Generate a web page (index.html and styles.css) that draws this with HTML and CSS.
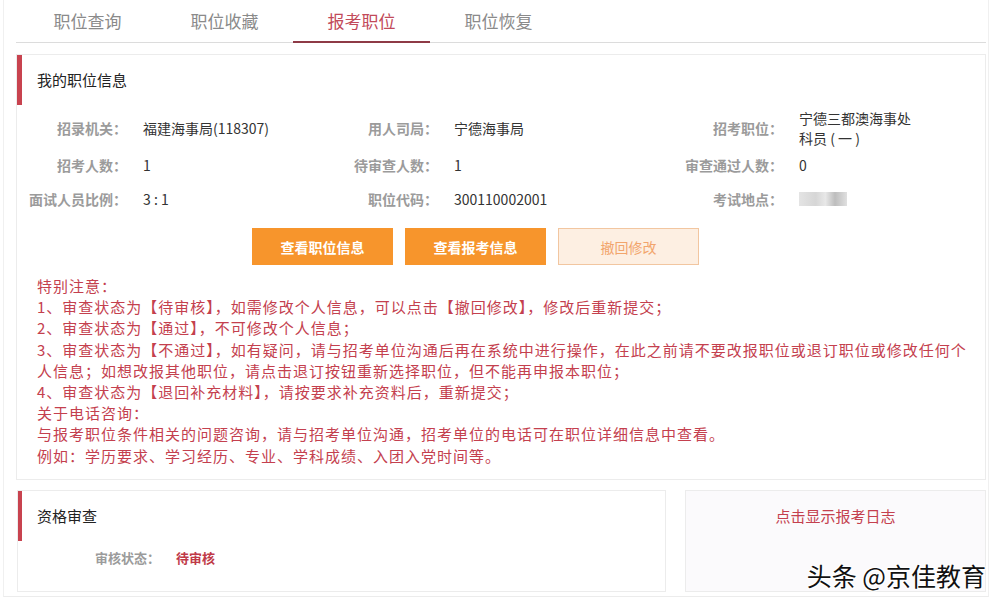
FILE: index.html
```html
<!DOCTYPE html>
<html lang="zh-CN">
<head>
    <meta charset="UTF-8">
    <meta name="viewport" content="width=device-width, initial-scale=1.0">
    <title>报考职位</title>
    <link rel="stylesheet" href="styles.css">
</head>
<body>
    <div class="page">
        <ul class="tabs">
            <li class="tab">职位查询</li>
            <li class="tab">职位收藏</li>
            <li class="tab active">报考职位</li>
            <li class="tab">职位恢复</li>
        </ul>

        <div class="panel">
            <div class="panel-title">我的职位信息</div>
            <div class="info-grid">
                <div class="label">招录机关：</div>
                <div class="value">福建海事局(118307)</div>
                <div class="label">用人司局：</div>
                <div class="value">宁德海事局</div>
                <div class="label">招考职位：</div>
                <div class="value">宁德三都澳海事处<br>科员 ( 一 )</div>

                <div class="label">招考人数：</div>
                <div class="value">1</div>
                <div class="label">待审查人数：</div>
                <div class="value">1</div>
                <div class="label">审查通过人数：</div>
                <div class="value">0</div>

                <div class="label">面试人员比例：</div>
                <div class="value">3 : 1</div>
                <div class="label">职位代码：</div>
                <div class="value">300110002001</div>
                <div class="label">考试地点：</div>
                <div class="value"><span class="blurred"></span></div>
            </div>

            <div class="actions">
                <button class="btn">查看职位信息</button>
                <button class="btn">查看报考信息</button>
                <button class="btn btn-light">撤回修改</button>
            </div>

            <div class="notice">
                <p>特别注意：</p>
                <p>1、审查状态为【待审核】，如需修改个人信息，可以点击【撤回修改】，修改后重新提交；</p>
                <p>2、审查状态为【通过】，不可修改个人信息；</p>
                <p>3、审查状态为【不通过】，如有疑问，请与招考单位沟通后再在系统中进行操作，在此之前请不要改报职位或退订职位或修改任何个人信息；如想改报其他职位，请点击退订按钮重新选择职位，但不能再申报本职位；</p>
                <p>4、审查状态为【退回补充材料】，请按要求补充资料后，重新提交；</p>
                <p>关于电话咨询：</p>
                <p>与报考职位条件相关的问题咨询，请与招考单位沟通，招考单位的电话可在职位详细信息中查看。</p>
                <p>例如：学历要求、学习经历、专业、学科成绩、入团入党时间等。</p>
            </div>
        </div>

        <div class="bottom-row">
            <div class="panel review">
                <div class="panel-title">资格审查</div>
                <div class="status-row">
                    <span class="status-label">审核状态：</span>
                    <span class="status-value">待审核</span>
                </div>
            </div>
            <div class="log-box">点击显示报考日志</div>
        </div>

        <div class="watermark">头条 @京佳教育</div>
    </div>
</body>
</html>
```

FILE: styles.css
```css
body {
    margin: 0;
    font-family: "Noto Sans CJK SC", "Microsoft YaHei", sans-serif;
    background-color: #fff;
    color: #333;
}
.page {
    position: relative;
    width: 986px;
    height: 597px;
    margin-left: 3px;
    padding: 0 2px 0 12px;
    box-sizing: border-box;
    border-left: 1px solid #f0f0f0;
    border-right: 1px solid #f0f0f0;
    border-bottom: 1px solid #ececec;
}
.tabs {
    list-style: none;
    margin: 0;
    padding: 0 0 0 3px;
    display: flex;
    height: 42px;
    border-bottom: 1px solid #dcdcdc;
}
.tab {
    width: 137px;
    height: 42px;
    line-height: 42px;
    text-align: center;
    font-size: 17px;
    color: #8a8a8a;
    box-sizing: border-box;
}
.tab.active {
    color: #c24a5a;
    border-bottom: 2px solid #8e3a46;
    height: 43px;
}
.panel {
    margin-top: 11px;
    border: 1px solid #ececec;
    background-color: #fff;
}
.panel-title {
    height: 50px;
    line-height: 50px;
    border-left: 5px solid #c8434f;
    padding-left: 15px;
    font-size: 15px;
    color: #222;
}
.info-grid {
    display: grid;
    grid-template-columns: 110px 201px 110px 235px 110px 1fr;
    grid-auto-rows: minmax(34px, auto);
    align-items: center;
    margin-top: 3px;
    font-size: 14px;
}
.label {
    text-align: right;
    color: #9b9b9b;
    font-weight: bold;
    white-space: nowrap;
}
.value {
    padding-left: 16px;
    color: #333;
    line-height: 20px;
}
.blurred {
    display: block;
    width: 48px;
    height: 14px;
    background: linear-gradient(90deg, #e4e4e4 0%, #d6d6d6 35%, #e8e8e8 55%, #bdbdbd 75%, #e0e0e0 100%);
}
.actions {
    display: flex;
    gap: 12px;
    padding-left: 235px;
    margin-top: 12px;
}
.btn {
    width: 141px;
    height: 37px;
    border: none;
    background-color: #f7952c;
    color: #fff;
    font-family: inherit;
    font-size: 14px;
    font-weight: bold;
    cursor: pointer;
}
.btn-light {
    background-color: #fdefe2;
    border: 1px solid #f2c6a0;
    color: #f2a56c;
    font-weight: normal;
}
.notice {
    margin: 10px 0 0 0;
    padding: 0 6px 13px 20px;
    color: #c4404e;
    font-size: 15px;
    letter-spacing: 1px;
    line-height: 21.2px;
}
.notice p {
    margin: 0;
}
.bottom-row {
    display: flex;
    gap: 19px;
    margin-top: 10px;
    margin-left: 1px;
}
.review {
    margin-top: 0;
    width: 649px;
    height: 102px;
    box-sizing: border-box;
    flex-shrink: 0;
}
.review .panel-title {
    border-left-width: 4px;
    padding-left: 15px;
}
.status-row {
    margin-top: 7px;
    padding-left: 77px;
    font-size: 13px;
    font-weight: bold;
}
.status-label {
    color: #9b9b9b;
    margin-right: 13px;
}
.status-value {
    color: #c03a48;
}
.log-box {
    width: 301px;
    height: 102px;
    box-sizing: border-box;
    flex-shrink: 0;
    border: 1px solid #ececec;
    background-color: #fbfafc;
    text-align: center;
    padding-top: 14px;
    font-size: 15px;
    color: #c4404e;
}
.watermark {
    position: absolute;
    right: 2px;
    top: 557px;
    font-size: 25px;
    color: #111;
    text-shadow: 1px 1px 0 #fff, -1px -1px 0 #fff, 1px -1px 0 #fff, -1px 1px 0 #fff, 0 0 3px #fff;
}
```
